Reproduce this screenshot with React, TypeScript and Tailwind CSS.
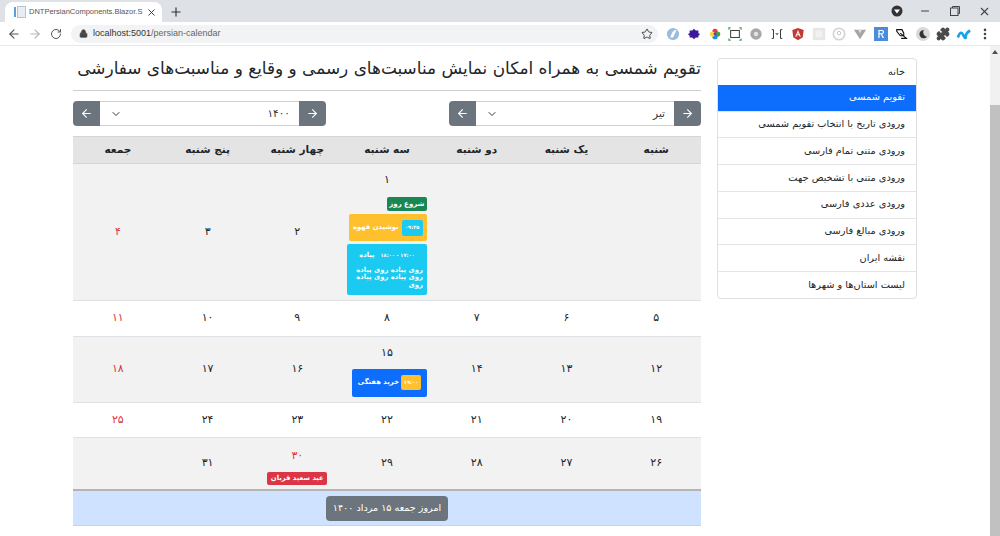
import { ArrowLeft, ArrowRight, ChevronDown, Plus, X, RotateCw, Lock, Star, Puzzle, Minus, EllipsisVertical } from "lucide-react";

const font = { fontFamily: '"DejaVu Sans", sans-serif' };

const nav = [
  "خانه",
  "تقویم شمسی",
  "ورودی تاریخ با انتخاب تقویم شمسی",
  "ورودی متنی تمام فارسی",
  "ورودی متنی با تشخیص جهت",
  "ورودی عددی فارسی",
  "ورودی مبالغ فارسی",
  "نقشه ایران",
  "لیست استان‌ها و شهرها",
];
const days = ["شنبه", "یک شنبه", "دو شنبه", "سه شنبه", "چهار شنبه", "پنج شنبه", "جمعه"];

function Ext() {
  return (
    <div className="flex items-center gap-[6.800px] ml-[8px]">
      <svg width="14" height="14" viewBox="0 0 16 16"><circle cx="8" cy="8" r="7" fill="#9cbcdc" /><path d="M5 12 Q7 3 12 3 Q10 8 8 12Z" fill="#fff" /></svg>
      <svg width="14" height="14" viewBox="0 0 16 16"><path d="M8 2l2 2h3v3l2 1-2 2v2h-3l-2 2-2-2H3v-2L1 8l2-1V4h3z" fill="#3c1a9c" /></svg>
      <svg width="14" height="14" viewBox="0 0 16 16"><circle cx="8" cy="5" r="3" fill="#e53935" /><circle cx="11" cy="8" r="3" fill="#43a047" /><circle cx="8" cy="11" r="3" fill="#1e88e5" /><circle cx="5" cy="8" r="3" fill="#fdd835" /><circle cx="8" cy="8" r="1.6" fill="#8e24aa" /></svg>
      <svg width="14" height="14" viewBox="0 0 16 16" fill="none"><rect x="3" y="4" width="10" height="8" stroke="#444" strokeWidth="1.2" /><path d="M1 3V1h2M13 1h2v2M15 13v2h-2M3 15H1v-2" stroke="#3a9c4a" strokeWidth="1.2" /></svg>
      <svg width="14" height="14" viewBox="0 0 16 16"><circle cx="8" cy="8" r="6.5" fill="#a8a8a8" /><circle cx="8" cy="8" r="2.5" fill="#e4e4e4" /></svg>
      <svg width="14" height="14" viewBox="0 0 16 16" fill="none"><path d="M2 3h2v10H2M14 3h-2v10h2" stroke="#333" strokeWidth="1.1" /><path d="M6 7l2 2.5L10 7z" fill="#555" /></svg>
      <svg width="14" height="14" viewBox="0 0 16 16"><path d="M8 1l6.5 2.3-1 8.5L8 15l-5.500-3.200-1-8.500z" fill="#c23a36" /><path d="M8 3.500L4.800 11h1.300l.6-1.600h2.600l.6 1.600h1.300zM7.200 8.300L8 6.200l.8 2.100z" fill="#fff" /></svg>
      <svg width="14" height="14" viewBox="0 0 16 16"><rect x="1" y="1" width="14" height="14" fill="#e6e6e6" /><rect x="4" y="4" width="8" height="8" fill="#f1f1f1" /></svg>
      <svg width="14" height="14" viewBox="0 0 16 16" fill="none"><circle cx="8" cy="8" r="6.500" stroke="#d6d6d6" strokeWidth="2" /><circle cx="8" cy="7" r="2" stroke="#bdbdbd" /></svg>
      <svg width="14" height="14" viewBox="0 0 16 16"><path d="M1 3h14l-7 11z" fill="#a6a6a6" /><path d="M6 3h4l-2 4z" fill="#e2e2e2" /></svg>
      <svg width="14" height="14" viewBox="0 0 16 16"><rect width="16" height="16" fill="#4a8bdc" /><path d="M5 3.500h4.200a2.300 2.300 0 010 4.600L11.500 12.500H9.800L7.800 8.200H6.400V12.500H5zM6.400 4.700V7h2.600a1.150 1.150 0 000-2.300z" fill="#fff" /></svg>
      <svg width="14" height="14" viewBox="0 0 16 16" fill="none" stroke="#111" strokeWidth="1.300"><path d="M2 3h6l2 4v3H6L2 5zM6 7l7 6M7 13h7" /></svg>
      <svg width="14" height="14" viewBox="0 0 16 16"><circle cx="8" cy="8" r="8" fill="#d9d9d9" /><path d="M9 3.500a4.700 4.700 0 103.500 7.500A5 5 0 019 3.500z" fill="#333" /></svg>
      <Puzzle size={14} fill="#4a4a4a" stroke="#4a4a4a" />
      <svg width="14" height="14" viewBox="0 0 16 16" fill="none" stroke="#18a4e8" strokeWidth="3"><path d="M1 12Q4 3 7 9t3 2 5-7" /></svg>
      <EllipsisVertical size={14} className="text-[#444]" strokeWidth={2.500} />
    </div>
  );
}

function Chrome() {
  return (
    <div dir="ltr" className="shrink-0" style={{ fontFamily: '"Liberation Sans", sans-serif' }}>
      <div className="h-[22px] bg-[#dee1e6] flex items-end pl-[5px] relative">
        <div className="w-[157px] h-[20px] bg-white rounded-t-lg flex items-center pl-[9px] gap-[3px]">
          <svg width="12" height="12" viewBox="0 0 12 12" className="shrink-0"><rect x="0" y="1" width="2" height="10" fill="#5aa0dc" /><rect x="3.500" y="0.500" width="8" height="11" fill="#e8edf2" stroke="#b8c4d0" /></svg>
          <span className="text-[7.500px] text-[#555] w-[114px] shrink-0 whitespace-nowrap">DNTPersianComponents.Blazor.S</span>
          <X size={11} className="text-[#333] shrink-0" />
        </div>
        <Plus size={14} className="text-[#333] ml-[7px] mb-[3px]" />
        <div className="ml-auto flex items-center h-[22px]">
          <svg width="12" height="12" viewBox="0 0 12 12" className="mr-[16px]"><circle cx="6" cy="6" r="5.500" fill="#333" /><path d="M3 4.500h6L6 8.500z" fill="#fff" /></svg>
          <Minus size={12} className="text-[#444] mr-[19px]" />
          <svg width="10" height="10" viewBox="0 0 10 10" fill="none" stroke="#444" className="mr-[18px]"><rect x="0.500" y="2" width="7.500" height="7.500" /><path d="M2.500 2V0.500H9.500V7.500H8" /></svg>
          <X size={13} className="text-[#444] mr-[9px]" />
        </div>
      </div>
      <div className="h-[24px] bg-white border-b border-[#e8e8e8] flex items-center pl-[7px]">
        <ArrowLeft size={14} className="text-[#555]" />
        <ArrowRight size={14} className="text-[#b5b5b5] ml-[7px]" />
        <RotateCw size={12} className="text-[#555] ml-[8px]" />
        <div className="ml-[9px] w-[587px] h-[18px] rounded-full bg-[#f1f3f4] flex items-center pl-[8px] pr-[5px] text-[9px]">
          <Lock size={9} className="text-[#444]" fill="#444" />
          <span className="ml-[5px] text-[#333]">localhost:5001</span>
          <span className="text-[#666]">/persian-calendar</span>
          <Star size={12} className="ml-auto text-[#444]" />
        </div>
        <Ext />
      </div>
    </div>
  );
}

function Btn({ right }: { right?: boolean }) {
  const Icon = right ? ArrowRight : ArrowLeft;
  return (
    <button className={"w-[27px] h-[25px] bg-[#6c757d] text-white flex items-center justify-center " + (right ? "rounded-r" : "rounded-l")}>
      <Icon size={13} />
    </button>
  );
}

function Picker({ label, w }: { label: string; w: string }) {
  return (
    <div dir="ltr" className={"flex h-[25px] " + w}>
      <Btn />
      <div className="flex-1 flex items-center justify-between bg-white border-y border-[#ced4da] pl-[10px] pr-[9px] text-[10.500px] text-[#333]">
        <ChevronDown size={12} className="text-[#333]" />
        <span>{label}</span>
      </div>
      <Btn right />
    </div>
  );
}

function Row({ h, bg, cells }: { h: string; bg: string; cells: React.ReactNode[] }) {
  return (
    <div className={"grid grid-cols-7 border-t border-[#dee2e6] " + h + " " + bg}>
      {cells.map((c, i) => (
        <div key={i} className={"flex flex-col justify-center items-center text-[11px] px-[5px] " + (i === 6 ? "text-[#dc3545]" : "text-[#212529]")}>
          {c}
        </div>
      ))}
    </div>
  );
}

export default function App() {
  return (
    <div className="h-[536px] w-[1000px] overflow-hidden flex flex-col bg-white" style={font}>
      <Chrome />
      <div className="flex-1 flex min-h-0" dir="ltr">
        <div className="flex-1 flex gap-4 pl-[73px] pt-[3px]">
          <main dir="rtl" className="w-[628px]">
            <h1 className="h-[41px] leading-[38px] text-[16.900px] text-[#212529] whitespace-nowrap">تقویم شمسی به همراه امکان نمایش مناسبت‌های رسمی و وقایع و مناسبت‌های سفارشی</h1>
            <div className="border-t border-[#cfcfcf] mb-[10px]" />
            <div dir="rtl" className="flex justify-between mb-[10px]">
              <Picker label="تیر" w="w-[252px]" />
              <Picker label="۱۴۰۰" w="w-[253px]" />
            </div>
            <div className="grid grid-cols-7 h-[28px] bg-[#e4e4e4] border-y border-[#d5d5d5] items-center text-center text-[10.500px] font-bold text-[#212529]">
              {days.map((d) => <div key={d}>{d}</div>)}
            </div>
            <div className="grid grid-cols-7 h-[136px] bg-[#f2f2f2]">
              <div /><div /><div />
              <div className="flex flex-col items-start px-[5px] pt-[8px]">
                <div className="self-center text-[11px] leading-[16px] text-[#212529] pb-[9px]">۱</div>
                <span className="w-[40px] h-[14px] rounded-[2px] bg-[#198754] text-white text-[7px] font-bold flex items-center justify-center">شروع روز</span>
                <div className="w-[78px] h-[27px] mt-[3px] rounded-[2px] bg-[#ffc02d] text-white text-[6.800px] font-bold flex items-center justify-center gap-[3px]">
                  <span className="w-[21px] h-[16px] rounded-[2px] bg-[#1bcaf0] text-[5px] flex items-center justify-center">۰۹:۴۵</span>
                  <span className="whitespace-nowrap">نوشیدن قهوه</span>
                </div>
                <div className="w-[80px] h-[51px] mt-[3px] rounded-[2px] bg-[#1bcaf0] text-white text-[6.800px] font-bold px-[4px] pt-[8px] leading-[7.500px]">
                  <div className="flex justify-center gap-[6px] mb-[7px]"><span className="text-[5px] whitespace-nowrap">۱۷:۰۰ - ۱۸:۰۰</span><span>پیاده</span></div>
                  روی پیاده روی پیاده روی پیاده روی پیاده روی
                </div>
              </div>
              <div className="flex items-center justify-center text-[11px] text-[#212529]">۲</div>
              <div className="flex items-center justify-center text-[11px] text-[#212529]">۳</div>
              <div className="flex items-center justify-center text-[11px] text-[#dc3545]">۴</div>
            </div>
            <Row h="h-[36px]" bg="bg-white" cells={["۵", "۶", "۷", "۸", "۹", "۱۰", "۱۱"]} />
            <Row h="h-[66px]" bg="bg-[#f2f2f2]" cells={["۱۲", "۱۳", "۱۴",
              <div className="w-full flex flex-col items-start pt-[2px]">
                <div className="self-center leading-[16px] mb-[8px]">۱۵</div>
                <div className="w-[75px] h-[28px] rounded-[2px] bg-[#0d6efd] text-white text-[6.800px] font-bold flex items-center justify-center gap-[2px]">
                  <span className="w-[20px] h-[15px] rounded-[2px] bg-[#ffc02d] text-[5px] flex items-center justify-center">۱۹:۰۰</span>
                  <span className="whitespace-nowrap">خرید هفتگی</span>
                </div>
              </div>,
              "۱۶", "۱۷", "۱۸"]} />
            <Row h="h-[35px]" bg="bg-white" cells={["۱۹", "۲۰", "۲۱", "۲۲", "۲۳", "۲۴", "۲۵"]} />
            <Row h="h-[52px]" bg="bg-[#f2f2f2]" cells={["۲۶", "۲۷", "۲۸", "۲۹",
              <div className="flex flex-col items-center pt-[5px]">
                <div className="text-[#dc3545] leading-[16px] mb-[8px]">۳۰</div>
                <span className="w-[60px] h-[13px] rounded-[2px] bg-[#dc3545] text-white text-[6.800px] font-bold flex items-center justify-center whitespace-nowrap">عید سعید قربان</span>
              </div>,
              "۳۱", ""]} />
            <div className="h-[37px] bg-[#cfe2ff] border-t-2 border-t-[#b4b4b4] border-b border-b-[#bcd4f8] flex items-center justify-center">
              <span className="w-[122px] h-[25px] rounded bg-[#6c757d] text-white text-[9.600px] flex items-center justify-center">امروز جمعه ۱۵ مرداد ۱۴۰۰</span>
            </div>
          </main>
          <nav dir="rtl" className="w-[200px] h-[241px] mt-[9px] rounded border border-[#dfdfdf] overflow-hidden flex flex-col">
            {nav.map((n, i) => (
              <div key={n} className={"flex-1 flex items-center px-[11px] text-[9.800px] border-[#e4e4e4] " + (i === 1 ? "bg-[#0d6efd] text-white" : "text-[#212529] " + (i > 1 ? "border-t" : ""))}>
                {n}
              </div>
            ))}
          </nav>
        </div>
        <div className="w-[10px] bg-[#f1f1f1] flex flex-col">
          <div className="h-[59px] flex justify-center pt-[4px]"><div className="w-0 h-0 border-x-[3px] border-x-transparent border-b-[4px] border-b-[#505050]" /></div>
          <div className="flex-1 bg-[#c1c1c1]" />
        </div>
      </div>
    </div>
  );
}
